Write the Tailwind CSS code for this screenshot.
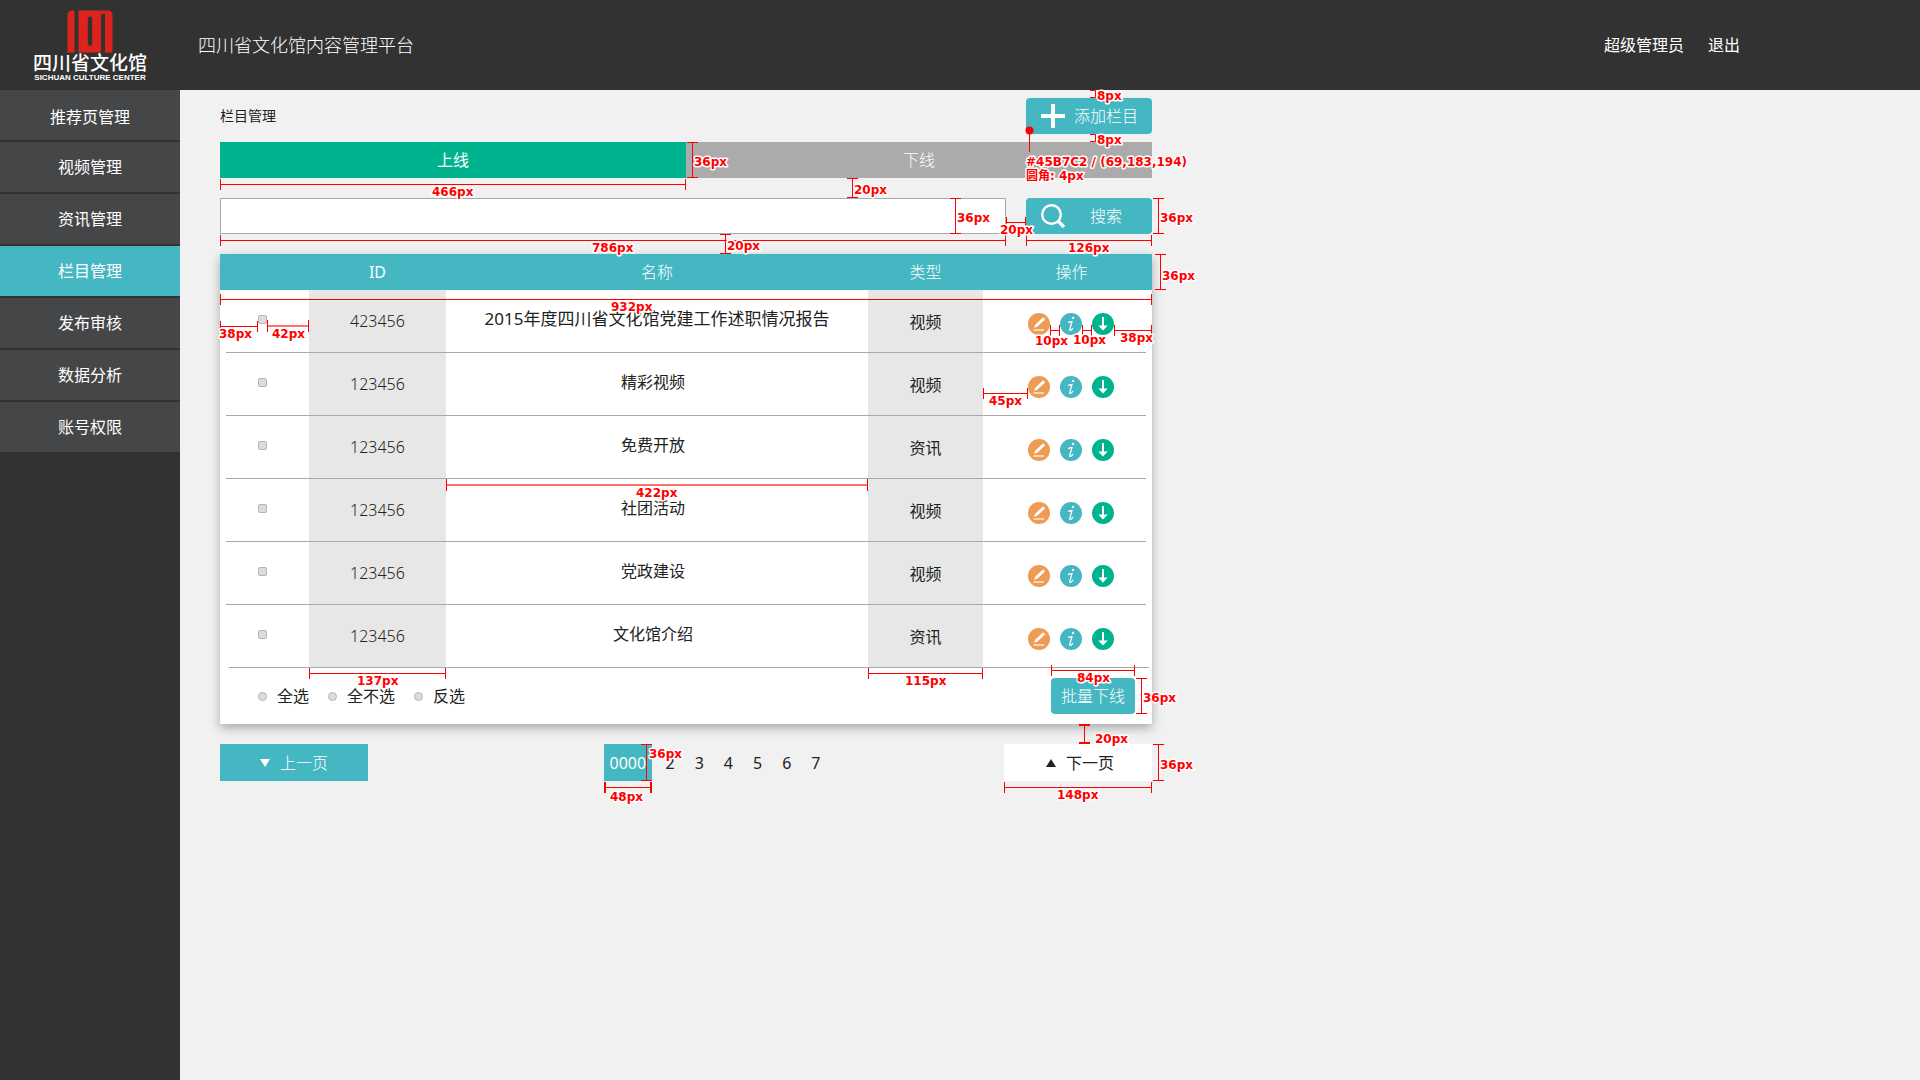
<!DOCTYPE html>
<html lang="zh-CN">
<head>
<meta charset="utf-8">
<meta name="viewport" content="width=device-width, initial-scale=1">
<title>四川省文化馆内容管理平台</title>
<script src="https://cdn.jsdelivr.net/npm/@tailwindcss/browser@4"></script>
</head>
<body class="flex min-h-screen flex-col bg-[#f1f1f1] font-['Noto_Sans','Noto_Sans_CJK_SC',sans-serif] text-base font-normal text-[#222]">

<!-- Icon shapes shared by the table rows -->
<svg class="hidden" aria-hidden="true">
  <symbol id="edit" viewBox="0 0 22 22">
    <circle cx="11" cy="11" r="11" fill="#ee9b54"/>
    <path d="M6 14.800 7.200 11.700 14.300 5a1.500 1.500 0 0 1 2.200 2L9.200 13.800z" fill="#fff"/>
    <path d="M5.500 17h10.500" stroke="#fff" stroke-width="1.200"/>
  </symbol>
  <symbol id="info" viewBox="0 0 22 22">
    <circle cx="11" cy="11" r="11" fill="#45b7c2"/>
    <circle cx="13" cy="4.900" r="1.200" fill="#fff"/>
    <path d="M8.500 9.300c1.300-.2 2.300-.5 3.500-.8l-2.300 8c-.3 1.400 1.300 1.200 3-1.200" fill="none" stroke="#fff" stroke-width="1.200" stroke-linecap="round"/>
  </symbol>
  <symbol id="down" viewBox="0 0 22 22">
    <circle cx="11" cy="11" r="11" fill="#00b38f"/>
    <path d="M10 4h2v8.500h3.700L11 17.500l-4.700-5H10z" fill="#fff"/>
  </symbol>
</svg>

<header class="flex h-[90px] items-center bg-[#323232] text-white">
  <a href="#" class="flex w-[180px] shrink-0 flex-col items-center pt-0.5" aria-label="四川省文化馆">
    <svg class="h-[43px] w-[46px]" viewBox="0 0 46 43" aria-hidden="true">
      <path fill="#dc241c" fill-rule="evenodd" d="M5 0.500H7.500V42.500H0.500V5a4.500 4.500 0 0 1 4.500-4.500zM11.500 0.500H41a4.500 4.500 0 0 1 4.500 4.500V42.500H38V4H34V42.500H11.500zM23 6.500q-2.200 0-2.200 3V33q0 3 2.200 3t2.200-3V9.500q0-3-2.200-3z"/>
    </svg>
    <span class="text-[19px] leading-5 font-medium">四川省文化馆</span>
    <span class="font-['Liberation_Sans',sans-serif] text-[8px] leading-[10px] font-bold whitespace-nowrap">SICHUAN CULTURE CENTER</span>
  </a>
  <h1 class="ml-[18px] grow text-lg font-light">四川省文化馆内容管理平台</h1>
  <nav class="flex gap-6 pr-[180px]">
    <a href="#">超级管理员</a>
    <a href="#">退出</a>
  </nav>
</header>

<div class="flex grow">
  <nav class="flex w-[180px] shrink-0 flex-col gap-0.5 bg-[#323232] text-white">
    <a href="#" class="flex h-[50px] items-center justify-center bg-[#454648] pt-1">推荐页管理</a>
    <a href="#" class="flex h-[50px] items-center justify-center bg-[#454648]">视频管理</a>
    <a href="#" class="flex h-[50px] items-center justify-center bg-[#454648]">资讯管理</a>
    <a href="#" class="flex h-[50px] items-center justify-center bg-[#45b7c2]" aria-current="page">栏目管理</a>
    <a href="#" class="flex h-[50px] items-center justify-center bg-[#454648]">发布审核</a>
    <a href="#" class="flex h-[50px] items-center justify-center bg-[#454648]">数据分析</a>
    <a href="#" class="flex h-[50px] items-center justify-center bg-[#454648]">账号权限</a>
  </nav>

  <main class="relative grow px-10 py-2">
    <div class="w-full max-w-[932px]">
      <div class="flex items-center justify-between">
        <h2 class="text-sm">栏目管理</h2>
        <button class="flex h-9 w-[126px] items-center justify-between rounded bg-[#45b7c2] pr-[14px] pl-[15px] font-light text-white">
          <svg class="size-6" viewBox="0 0 24 24" aria-hidden="true"><path d="M12 0v24M0 12h24" stroke="#fff" stroke-width="4"/></svg>
          <span>添加栏目</span>
        </button>
      </div>

      <div class="mt-2 flex h-9 text-white">
        <button class="w-1/2 bg-[#00b38f]">上线</button>
        <button class="w-1/2 bg-[#ababab] font-light">下线</button>
      </div>

      <form class="mt-5 flex gap-5">
        <input type="text" aria-label="搜索栏目" class="h-9 min-w-0 grow border border-[#a9a9a9] bg-white px-2">
        <button type="button" class="flex h-9 w-[126px] shrink-0 items-center justify-between rounded bg-[#45b7c2] pr-[30px] pl-[15px] font-light text-white">
          <svg class="size-6" viewBox="0 0 24 24" fill="none" stroke="#fff" aria-hidden="true"><circle cx="10.500" cy="10.500" r="9.300" stroke-width="2.400"/><path d="M17.500 17.500l5.500 5.500" stroke-width="3.400"/></svg>
          <span>搜索</span>
        </button>
      </form>

      <section class="mt-5 bg-white shadow-[0_4px_10px_rgba(0,0,0,0.3)]">
        <table class="w-full table-fixed border-collapse text-center">
          <colgroup>
            <col class="w-[89px]"><col class="w-[137px]"><col><col class="w-[115px]"><col class="w-[169px]">
          </colgroup>
          <thead class="bg-[#45b7c2] text-white">
            <tr class="h-9">
              <th class="p-0"></th>
              <th class="p-0 font-normal">ID</th>
              <th class="p-0 font-light">名称</th>
              <th class="p-0 font-light">类型</th>
              <th class="p-0 pl-2 font-light">操作</th>
            </tr>
          </thead>
          <tbody id="rows"></tbody>
        </table>

        <div class="flex h-14 items-center pr-[17px] pl-[38px]">
          <div class="flex gap-[19px]">
            <label class="flex items-center gap-2.5"><input type="radio" name="pick" class="size-[9px] appearance-none rounded-full border border-[#b5b5b5] bg-[#dcdcdc]">全选</label>
            <label class="flex items-center gap-2.5"><input type="radio" name="pick" class="size-[9px] appearance-none rounded-full border border-[#b5b5b5] bg-[#dcdcdc]">全不选</label>
            <label class="flex items-center gap-2.5"><input type="radio" name="pick" class="size-[9px] appearance-none rounded-full border border-[#b5b5b5] bg-[#dcdcdc]">反选</label>
          </div>
          <button class="ml-auto h-9 w-[84px] rounded bg-[#45b7c2] font-light text-white">批量下线</button>
        </div>
      </section>

      <div class="mt-5 flex h-[37px] items-center justify-between">
        <button class="flex h-full w-[148px] items-center justify-center gap-2.5 bg-[#45b7c2] font-light text-white">
          <svg class="h-2 w-2.5" viewBox="0 0 10 8" aria-hidden="true"><path d="M0 0h10L5 8z" fill="#fff"/></svg>
          上一页
        </button>
        <nav class="flex h-full grow items-center justify-center gap-5 pl-[52px]">
          <a href="#" class="-mr-1.5 flex h-full w-12 items-center bg-[#45b7c2] pl-1.5 text-white" aria-current="page">0000</a>
          <a href="#">2</a>
          <a href="#">3</a>
          <a href="#">4</a>
          <a href="#">5</a>
          <a href="#">6</a>
          <a href="#">7</a>
        </nav>
        <button class="flex h-full w-[148px] items-center justify-center gap-2.5 bg-white pl-1">
          <svg class="h-2 w-2.5" viewBox="0 0 10 8" aria-hidden="true"><path d="M0 8h10L5 0z" fill="#222"/></svg>
          下一页
        </button>
      </div>
    </div>

    <!-- Dimension callouts laid over the content, in page coordinates -->
    <svg class="pointer-events-none absolute inset-0 size-full overflow-visible" aria-hidden="true">
      <g transform="translate(-180 -90)">
        <g fill="none" stroke="#f00">
          <path d="M220.500 179v11M220.500 184.500H685.500M685.500 179v11"/>
          <path d="M1090 90.500h5.500V97.500h-5.500M1090 134.500h5.500V141.500h-5.500"/>
          <path d="M1029.500 130V152"/>
          <path d="M687 142.500h11M692.500 142.500V177.500M687 177.500h11"/>
          <path d="M847 178.500h11M852.500 178.500V197.500M847 197.500h11"/>
          <path d="M950 198.500h11M955.500 198.500V233.500M950 233.500h11"/>
          <path d="M1006.500 217v11M1006.500 222.500H1025.500M1025.500 217v11"/>
          <path d="M1153 198.500h11M1158.500 198.500V233.500M1153 233.500h11"/>
          <path d="M220.500 235v11M220.500 240.500H1005.500M1005.500 235v11"/>
          <path d="M720 234.500h11M725.500 234.500V253.500M720 253.500h11"/>
          <path d="M1026.500 235v11M1026.500 240.500H1151.500M1151.500 235v11"/>
          <path d="M1155 254.500h11M1160.500 254.500V289.500M1155 289.500h11"/>
          <path d="M220.500 294v11M220.500 299.500H1151.500M1151.500 294v11"/>
          <path d="M220.500 321v11M220.500 326.500H257.500M257.500 321v11"/>
          <path d="M267.500 320v12M308.500 320v12"/>
          <path d="M268 326H308M447 485H867" stroke="#ff7070" stroke-width="2"/>
          <path d="M1050.500 325v11M1050.500 330.500H1059.500M1059.500 325v11"/>
          <path d="M1082.500 325v11M1082.500 330.500H1091.500M1091.500 325v11"/>
          <path d="M1114.500 325v11M1114.500 330.500H1151.500M1151.500 325v11"/>
          <path d="M983.500 388v11M983.500 393.500H1027.500M1027.500 388v11"/>
          <path d="M446.500 479v12M867.500 479v12"/>
          <path d="M309.500 668v11M309.500 673.500H445.500M445.500 668v11"/>
          <path d="M868.500 668v11M868.500 673.500H982.500M982.500 668v11"/>
          <path d="M1051.500 665v11M1051.500 670.500H1134.500M1134.500 665v11"/>
          <path d="M1136 678.500h11M1141.500 678.500V713.500M1136 713.500h11"/>
          <path d="M1084.500 725V743"/>
          <path d="M1079 725h11M1079 743h11" stroke-width="2"/>
          <path d="M1153 744.500h11M1158.500 744.500V780.500M1153 780.500h11"/>
          <path d="M1004.500 782v11M1004.500 787.500H1151.500M1151.500 782v11"/>
          <path d="M641 744.500h11M646.500 744.500V780.500M641 780.500h11"/>
          <path d="M605 787.500H651"/>
          <path d="M605 782v11M651 782v11" stroke-width="2"/>
        </g>
        <circle cx="1029.500" cy="130.500" r="4" fill="#f00"/>
        <g class="font-['DejaVu_Sans','Noto_Sans_CJK_SC',sans-serif] text-xs font-bold" fill="#f00" stroke="#fff" stroke-width="3" stroke-linejoin="round" paint-order="stroke">
          <text x="432" y="196">466px</text>
          <text x="1097" y="100">8px</text>
          <text x="1097" y="144">8px</text>
          <text x="1026" y="166">#45B7C2 / (69,183,194)</text>
          <text x="1026" y="180">圆角: 4px</text>
          <text x="694" y="166">36px</text>
          <text x="854" y="194">20px</text>
          <text x="957" y="222">36px</text>
          <text x="1000" y="234">20px</text>
          <text x="1160" y="222">36px</text>
          <text x="592" y="252">786px</text>
          <text x="727" y="250">20px</text>
          <text x="1068" y="252">126px</text>
          <text x="1162" y="280">36px</text>
          <text x="611" y="311">932px</text>
          <text x="219" y="338">38px</text>
          <text x="272" y="338">42px</text>
          <text x="1035" y="345">10px</text>
          <text x="1073" y="344">10px</text>
          <text x="1120" y="342">38px</text>
          <text x="989" y="405">45px</text>
          <text x="636" y="497">422px</text>
          <text x="357" y="685">137px</text>
          <text x="905" y="685">115px</text>
          <text x="1077" y="682">84px</text>
          <text x="1143" y="702">36px</text>
          <text x="1095" y="743">20px</text>
          <text x="1160" y="769">36px</text>
          <text x="1057" y="799">148px</text>
          <text x="649" y="758">36px</text>
          <text x="610" y="801">48px</text>
        </g>
      </g>
    </svg>
  </main>
</div>

<script>
  const data = [
    ['423456', '2015年度四川省文化馆党建工作述职情况报告', '视频'],
    ['123456', '精彩视频', '视频'],
    ['123456', '免费开放', '资讯'],
    ['123456', '社团活动', '视频'],
    ['123456', '党政建设', '视频'],
    ['123456', '文化馆介绍', '资讯'],
  ];
  const action = (icon, label) =>
    `<button class="size-[22px]" aria-label="${label}"><svg class="size-[22px]"><use href="#${icon}"/></svg></button>`;
  document.getElementById('rows').innerHTML = data.map(([id, name, type], i) => `
    <tr class="relative h-[63px]">
      <td class="p-0 pb-1 pl-[38px] text-left after:absolute after:bottom-0 after:h-px after:bg-[#a9a9a9] ${i === 5 ? 'after:left-[9px] after:right-[3px]' : 'after:inset-x-1.5'}"><input type="checkbox" aria-label="${name}" class="block size-[9px] appearance-none rounded-xs border border-[#b5b5b5] bg-[#dcdcdc]"></td>
      <td class="bg-[#e7e7e7] p-0 pb-0.5 font-light">${id}</td>
      <td class="p-0 pb-1.5 ${i === 0 ? 'text-[17px]' : 'pr-2'}">${name}</td>
      <td class="bg-[#e7e7e7] p-0">${type}</td>
      <td class="p-0 pt-1 pl-[45px]"><div class="flex gap-2.5">${action('edit', '编辑')}${action('info', '详情')}${action('down', '下线')}</div></td>
    </tr>`).join('');
</script>
</body>
</html>
